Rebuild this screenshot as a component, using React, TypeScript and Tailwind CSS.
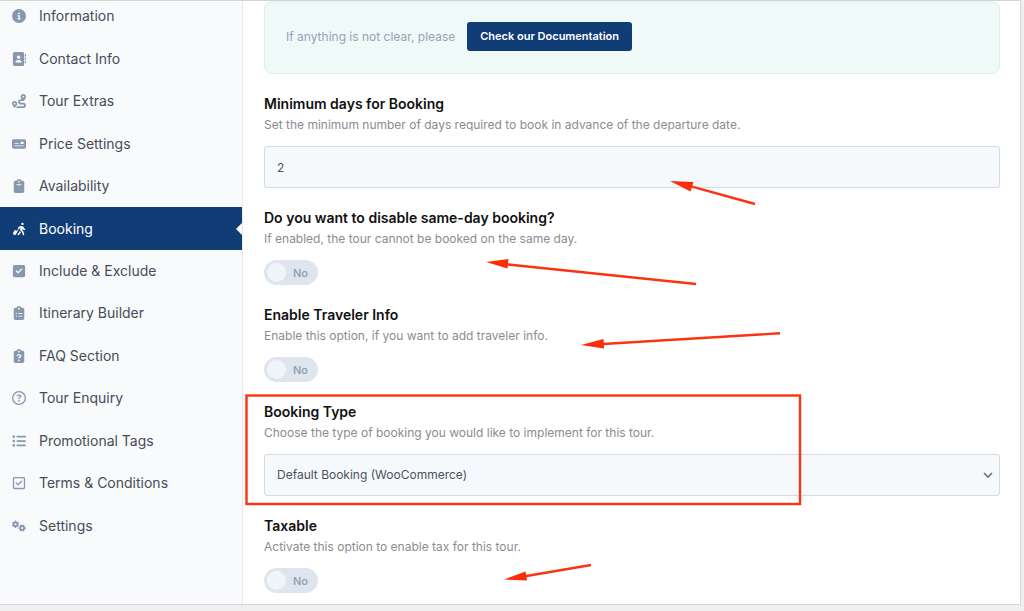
import type { ReactNode } from 'react'
import type { IconType } from 'react-icons'
import {
    FaAddressBook,
    FaCircleInfo,
    FaClipboard,
    FaClipboardList,
    FaClipboardQuestion,
    FaGears,
    FaListUl,
    FaMoneyCheck,
    FaPersonWalkingLuggage,
    FaRegCircleQuestion,
    FaRegSquareCheck,
    FaRoute,
    FaSquareCheck,
} from 'react-icons/fa6'

type MenuItem = { label: string; icon: IconType }

const menu: MenuItem[] = [
    { label: 'Information', icon: FaCircleInfo },
    { label: 'Contact Info', icon: FaAddressBook },
    { label: 'Tour Extras', icon: FaRoute },
    { label: 'Price Settings', icon: FaMoneyCheck },
    { label: 'Availability', icon: FaClipboard },
    { label: 'Booking', icon: FaPersonWalkingLuggage },
    { label: 'Include & Exclude', icon: FaSquareCheck },
    { label: 'Itinerary Builder', icon: FaClipboardList },
    { label: 'FAQ Section', icon: FaClipboardQuestion },
    { label: 'Tour Enquiry', icon: FaRegCircleQuestion },
    { label: 'Promotional Tags', icon: FaListUl },
    { label: 'Terms & Conditions', icon: FaRegSquareCheck },
    { label: 'Settings', icon: FaGears },
]

function Sidebar() {
    return (
        <nav className="flex w-[243px] shrink-0 flex-col border-r border-[#e6eaf0] bg-[#f8fafc] pb-[57px]">
            <ul className="-mt-1.5 grid flex-1 auto-rows-fr text-[14px] leading-5">
                {menu.map(({ label, icon: Icon }) => {
                    const active = label === 'Booking'
                    return (
                        <li key={label}>
                            <a
                                href="#"
                                aria-current={active ? 'page' : undefined}
                                className={
                                    active
                                        ? 'relative flex h-full items-center gap-3 bg-[#113d77] pl-[11px] text-white'
                                        : 'flex h-full items-center gap-3 pl-[11px] text-[#474c57]'
                                }
                            >
                                <span className={active ? 'flex w-4 justify-center text-white' : 'flex w-4 justify-center text-[#8798ae]'}>
                                    <Icon className="size-3.5" />
                                </span>
                                {label}
                                {active && (
                                    <span className="absolute top-1/2 right-0 -translate-y-1/2 border-y-6 border-r-6 border-y-transparent border-r-white" />
                                )}
                            </a>
                        </li>
                    )
                })}
            </ul>
        </nav>
    )
}

function Field({ id, title, hint, children }: { id: string; title: string; hint: string; children: ReactNode }) {
    return (
        <div>
            <label htmlFor={id} className="block text-[14px] leading-5 font-semibold text-[#111111]">
                {title}
            </label>
            <p className="mb-[11px] text-[12px] leading-[21px] text-[#8b8c90]">{hint}</p>
            {children}
        </div>
    )
}

function Toggle({ id }: { id: string }) {
    return (
        <label className="flex h-[25px] w-[54px] cursor-pointer items-center rounded-full bg-[#dee5ee] pr-2.5 pl-[3px] has-checked:bg-[#113d77]">
            <input id={id} type="checkbox" className="size-[19px] appearance-none rounded-full bg-[#f0f5fa]" />
            <span className="flex-1 text-right text-[11px] leading-4 font-medium text-[#8b9bb0]">No</span>
        </label>
    )
}

function Annotations() {
    return (
        <svg className="pointer-events-none absolute top-0 left-0" width="1024" height="611" fill="none" stroke="#fb3311" strokeWidth="2.4">
            <rect x="246.500" y="395.500" width="553.500" height="108.500" />
            <path d="M692 186.700L755 204M508 264.500L696 284M603 344L780 333.300M525 576.200L591 565" />
            <g fill="#fb2c08" stroke="none">
                <path d="M670 181L693.500 182L690.500 191.500Z" />
                <path d="M486 262L508.500 259L507.500 268.500Z" />
                <path d="M581 345L603.500 339L604 348.500Z" />
                <path d="M504 579.500L525.500 571.500L527 580.500Z" />
            </g>
        </svg>
    )
}

export default function App() {
    return (
        <div className="relative min-h-screen bg-[#f0f0f1] pr-[3px] font-['Inter',sans-serif]">
            <div className="flex border-y border-r border-[#d4d5d8] bg-white">
                <Sidebar />
                <main className="flex flex-1 flex-col gap-5 pr-5 pb-[11px] pl-[21px]">
                    <div className="flex items-center gap-3 rounded-lg border border-[#dff0ef] bg-[#eff9f8] px-[21px] pt-5 pb-[22px]">
                        <span className="text-[12px] leading-5 text-[#95a3b7]">If anything is not clear, please</span>
                        <button className="rounded-[3px] bg-[#113d77] px-[13px] py-1 text-[11px] leading-[21px] font-semibold text-white">
                            Check our Documentation
                        </button>
                    </div>

                    <Field
                        id="min-days"
                        title="Minimum days for Booking"
                        hint="Set the minimum number of days required to book in advance of the departure date."
                    >
                        <input
                            id="min-days"
                            type="text"
                            defaultValue="2"
                            className="block h-[42px] w-full rounded-[3px] border border-[#d5dbe5] bg-[#f6f9fc] px-3 text-[12px] text-[#4b5260]"
                        />
                    </Field>

                    <Field
                        id="same-day"
                        title="Do you want to disable same-day booking?"
                        hint="If enabled, the tour cannot be booked on the same day."
                    >
                        <Toggle id="same-day" />
                    </Field>

                    <Field
                        id="traveler-info"
                        title="Enable Traveler Info"
                        hint="Enable this option, if you want to add traveler info."
                    >
                        <Toggle id="traveler-info" />
                    </Field>

                    <Field
                        id="booking-type"
                        title="Booking Type"
                        hint="Choose the type of booking you would like to implement for this tour."
                    >
                        <div className="relative">
                            <select
                                id="booking-type"
                                className="block h-[42px] w-full appearance-none rounded-[3px] border border-[#d5dbe5] bg-[#f6f9fc] px-3 text-[12px] text-[#4b5260]"
                            >
                                <option>Default Booking (WooCommerce)</option>
                            </select>
                            <svg
                                className="pointer-events-none absolute inset-y-0 right-[7px] my-auto"
                                width="10"
                                height="7"
                                fill="none"
                                stroke="#6b6f76"
                                strokeWidth="1.6"
                            >
                                <path d="M1 1L5 5L9 1" />
                            </svg>
                        </div>
                    </Field>

                    <Field id="taxable" title="Taxable" hint="Activate this option to enable tax for this tour.">
                        <Toggle id="taxable" />
                    </Field>
                </main>
            </div>
            <Annotations />
        </div>
    )
}
